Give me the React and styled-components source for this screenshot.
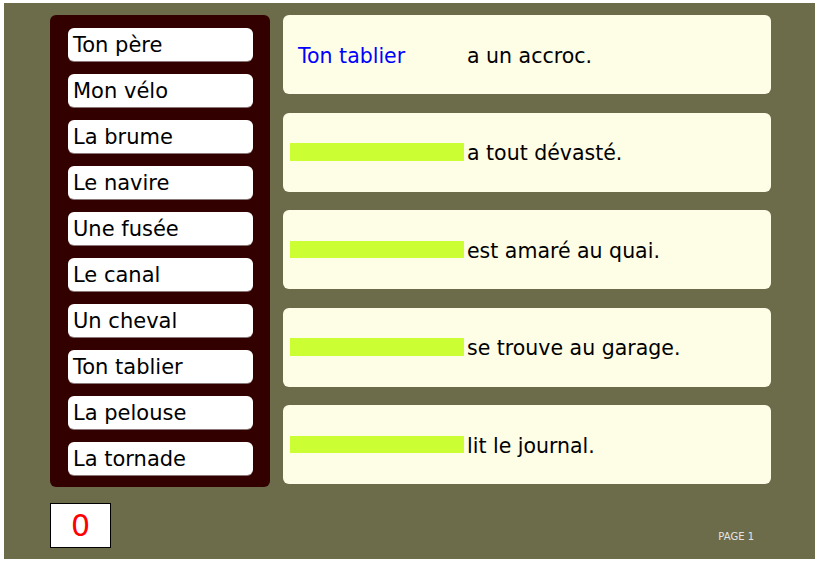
import React from "react";
import styled, { createGlobalStyle } from "styled-components";

const GlobalStyle = createGlobalStyle`
  body {
    margin: 0;
    background: #fff;
    font-family: "DejaVu Sans", "Liberation Sans", sans-serif;
  }
`;

const Frame = styled.div`
  margin: 3px 0 0 4px;
  width: 811px;
  height: 556px;
  box-sizing: border-box;
  padding: 12px 0 0 46px;
  background: #6c6c4a;
  display: grid;
  grid-template-columns: 220px 488px;
  grid-template-rows: 472px auto;
  column-gap: 13px;
  row-gap: 16px;
`;

// ========== 단어 목록 ==========

const WordPanel = styled.div`
  background: #330000;
  border-radius: 6px;
  padding: 13px 17px 0 18px;
  display: flex;
  flex-direction: column;
  gap: 13px;
`;

const WordButton = styled.div`
  height: 33px;
  box-sizing: border-box;
  background: #fff;
  border-radius: 6px;
  box-shadow: 0 1px 0 #8a7777;
  padding: 1px 0 0 5px;
  display: flex;
  align-items: center;
  font-size: 21px;
  color: #000;
`;

// ========== 문장 카드 ==========

const CardList = styled.div`
  display: flex;
  flex-direction: column;
  gap: 18.5px;
`;

const Card = styled.div`
  height: 79px;
  box-sizing: border-box;
  background: #fefde6;
  border-radius: 6px;
  display: flex;
  align-items: center;
  padding: 2px 0 0 7px;
  font-size: 20.5px;
`;

const Slot = styled.div`
  width: 174px;
  height: 17.5px;
  background: #ccff33;
  margin: -2px 3px 0 0;
`;

const Answer = styled.span`
  display: inline-block;
  width: 169px;
  padding-left: 8px;
  color: #0000ff;
`;

const Rest = styled.span`
  color: #000;
`;

// ========== 하단 ==========

const Counter = styled.div`
  width: 61px;
  height: 45px;
  box-sizing: border-box;
  border: 1px solid #000;
  background: #fff;
  color: #ff0000;
  font-size: 30px;
  display: flex;
  align-items: center;
  justify-content: center;
`;

const PageLabel = styled.div`
  justify-self: end;
  margin-right: 17px;
  margin-top: 28px;
  font-size: 10px;
  color: #e4e4e4;
`;

const words = [
  "Ton père",
  "Mon vélo",
  "La brume",
  "Le navire",
  "Une fusée",
  "Le canal",
  "Un cheval",
  "Ton tablier",
  "La pelouse",
  "La tornade",
];

const sentences = [
  { answer: "Ton tablier", rest: "a un accroc." },
  { answer: null, rest: "a tout dévasté." },
  { answer: null, rest: "est amaré au quai." },
  { answer: null, rest: "se trouve au garage." },
  { answer: null, rest: "lit le journal." },
];

export default function App() {
  return (
    <>
      <GlobalStyle />
      <Frame>
        <WordPanel>
          {words.map((w) => (
            <WordButton key={w}>{w}</WordButton>
          ))}
        </WordPanel>
        <CardList>
          {sentences.map((s) => (
            <Card key={s.rest}>
              {s.answer ? <Answer>{s.answer}</Answer> : <Slot />}
              <Rest>{s.rest}</Rest>
            </Card>
          ))}
        </CardList>
        <Counter>0</Counter>
        <PageLabel>PAGE 1</PageLabel>
      </Frame>
    </>
  );
}
